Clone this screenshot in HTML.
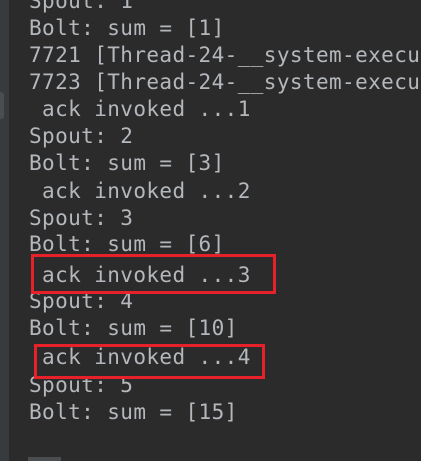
<!DOCTYPE html>
<html><head><style>
html,body{margin:0;padding:0;width:421px;height:461px;overflow:hidden;background:#2b2b2b;position:relative}
.g{position:absolute;left:0;top:0;width:9px;height:461px;background:#383b3d}
.gb{position:absolute;left:0;top:92px;width:4px;height:27px;background:#4b4e50;border-radius:0 3px 3px 0}
.l{position:absolute;left:29px;width:392px;overflow:hidden;font-family:"DejaVu Sans Mono","Liberation Mono",monospace;font-size:21px;letter-spacing:0.4px;color:#b4b8bc;white-space:pre;line-height:27px}
.box{position:absolute;border:3px solid #e8202a;box-sizing:border-box}
</style></head><body>
<div class="g"></div><div class="gb"></div>
<div class="l" style="top:-12px">Spout: 1</div>
<div class="l" style="top:15px">Bolt: sum = [1]</div>
<div class="l" style="top:42px">7721 [Thread-24-__system-executor</div>
<div class="l" style="top:69px">7723 [Thread-24-__system-executor</div>
<div class="l" style="top:96px"> ack invoked ...1</div>
<div class="l" style="top:123px">Spout: 2</div>
<div class="l" style="top:150px">Bolt: sum = [3]</div>
<div class="l" style="top:178px"> ack invoked ...2</div>
<div class="l" style="top:205px">Spout: 3</div>
<div class="l" style="top:231px">Bolt: sum = [6]</div>
<div class="l" style="top:262px"> ack invoked ...3</div>
<div class="l" style="top:288px">Spout: 4</div>
<div class="l" style="top:315px">Bolt: sum = [10]</div>
<div class="l" style="top:344px"> ack invoked ...4</div>
<div class="l" style="top:372px">Spout: 5</div>
<div class="l" style="top:399px">Bolt: sum = [15]</div>
<div class="box" style="left:31px;top:254px;width:245px;height:40px"></div>
<div class="box" style="left:34px;top:344px;width:231px;height:35px"></div>
<div style="position:absolute;left:28px;top:457px;width:33px;height:4px;background:#4b4e50"></div>
</body></html>
